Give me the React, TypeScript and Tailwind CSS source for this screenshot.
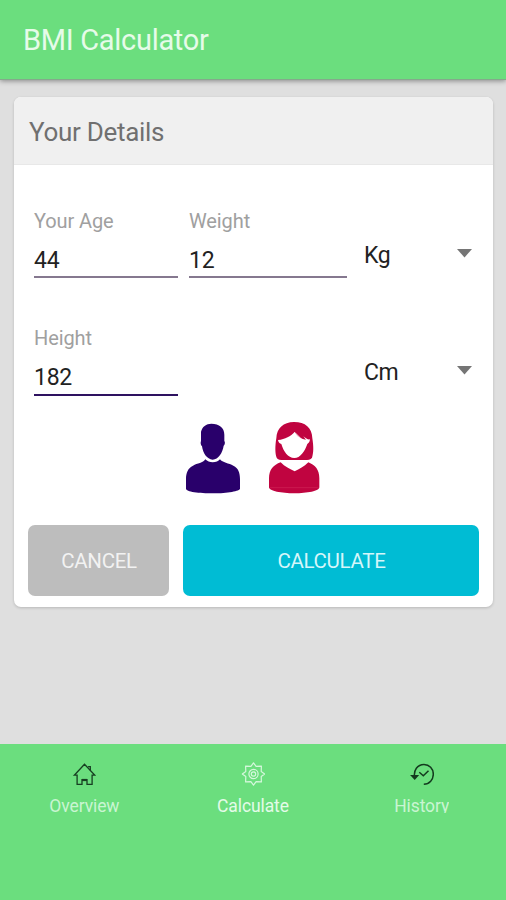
import { useState } from "react";

type FieldProps = {
  label: string;
  value: string;
  onChange: (value: string) => void;
  className: string;
  active?: boolean;
};

function Field({ label, value, onChange, className, active }: FieldProps) {
  return (
    <label className={`block ${className}`}>
      <span className="block h-6 text-[20px] leading-6 tracking-[-0.1px] text-[#a0a0a0]">{label}</span>
      <input
        value={value}
        onChange={(e) => onChange(e.target.value)}
        className={`mt-[13px] block w-full border-b-2 bg-transparent pb-0.5 text-[23px] leading-7 tracking-[-0.3px] text-[#222] outline-none ${
          active ? "h-[33px] border-[#2e1260]" : "h-8 border-[#85788f]"
        }`}
      />
    </label>
  );
}

function UnitSelect({ unit }: { unit: string }) {
  return (
    <button className="flex h-8 w-[109px] items-center justify-between text-[23px] leading-8 text-[#222]">
      <span className="pl-px tracking-[-0.4px]">{unit}</span>
      <svg width="15" height="9" viewBox="0 0 15 9" className="-mt-1.5">
        <path d="M0 0H15L7.5 8.5Z" fill="#757575" />
      </svg>
    </button>
  );
}

function ManIcon() {
  return (
    <svg width="56" height="75" viewBox="45 30 168 225" fill="#29006b">
      <path d="M93 66C96 50 109 41 124 41C148 41 163 53 163 74V93C166 96 165 104 161 107C158 128 145 148 128 149C111 148 99 130 96 109C92 106 91 97 93 93Z" />
      <path d="M106 148C112 153 119 157 128 157C138 157 145 153 150 148C157 158 177 160 190 167C205 174 210 188 210 207V236C210 243 172 250 130 250C87 250 48 245 48 236V207C48 188 54 174 69 167C82 160 99 159 106 148Z" />
    </svg>
  );
}

function WomanIcon() {
  return (
    <svg width="52" height="75" viewBox="294 30 156 225">
      <path
        d="M372 36C406 36 426 53 427 85C431 110 431 128 426 143C422 149 414 150 404 150H342C331 150 323 149 320 143C315 131 315 108 319 85C320 55 340 36 372 36Z"
        fill="#c00440"
      />
      <path
        d="M324 90C346 88 362 79 374 66C380 78 391 87 408 89L400 79C408 85 414 90 420 88C419 97 415 100 412 102C404 125 391 144 373 144C354 144 340 123 334 102C329 101 325 97 324 90Z"
        fill="white"
      />
      <path d="M374 67L394 87" stroke="white" strokeWidth="3" />
      <path
        d="M332 157C344 170 360 178 374 184C388 178 402 170 415 157C436 166 448 179 448 205V232C448 243 412 250 373 250C335 250 297 243 297 232V205C297 179 310 165 332 157Z"
        fill="#c00440"
      />
      <path d="M300 233H446" stroke="#d02458" strokeWidth="2" />
    </svg>
  );
}

function HomeIcon() {
  return (
    <svg width="24" height="24" viewBox="-0.5 0 24 24" fill="none" stroke="#173f22" strokeWidth="1.3">
      <path d="M1.8 13.2L12 2.3L22.4 13.2H19.6V22.3H14.5V17.7H9.5V22.3H4.6V13.2Z" />
      <path d="M15.6 4.7H17.8V8.2" />
      <path d="M9.5 18H14.5" strokeWidth="2.2" />
    </svg>
  );
}

function GearIcon() {
  return (
    <svg width="24" height="24" viewBox="-0.5 0 24 24" fill="none" stroke="#d5f7dc" strokeWidth="1.2" strokeLinejoin="round">
      <path d="M12 .8L14.6 4.3L19.9 4.1L19.7 9.4L23.2 12L19.7 14.6L19.9 19.9L14.6 19.7L12 23.2L9.4 19.7L4.1 19.9L4.3 14.6L.8 12L4.3 9.4L4.1 4.1L9.4 4.3Z" />
      <circle cx="12" cy="12" r="4.6" />
      <circle cx="12" cy="12" r="2.2" />
    </svg>
  );
}

function HistoryIcon() {
  return (
    <svg width="24" height="24" viewBox="-1.5 0 24 24" fill="none" stroke="#143a1e" strokeWidth="1.5">
      <path d="M3.2 15.5C1.7 8.4 6 2.4 12.5 2.4C17.8 2.4 21.8 6.6 21.8 12.2C21.8 17.6 18 22 12.3 22.2" />
      <path d="M0.3 13.7L3.2 16.8L6 13.7Z" fill="#143a1e" />
      <path d="M7.8 10.3L11.8 13.8L17 8.8" />
    </svg>
  );
}

const tabs = [
  { label: "Overview", icon: HomeIcon, color: "text-[#c9f5d2]" },
  { label: "Calculate", icon: GearIcon, color: "text-[#e3fbe8]" },
  { label: "History", icon: HistoryIcon, color: "h-[19px] overflow-hidden text-[#c9f5d2]" },
];

export default function App() {
  const [age, setAge] = useState("44");
  const [weight, setWeight] = useState("12");
  const [height, setHeight] = useState("182");

  return (
    <div className="flex h-[900px] w-[506px] flex-col overflow-hidden bg-[#dfdfdf] font-[Roboto,sans-serif]">
      <header className="h-20 shrink-0 border-b border-[#85a98c] bg-[#6bde7e] pl-[23px] pt-5 shadow-[0_1px_5px_rgba(0,0,0,0.4)]">
        <h1 className="text-[29px] leading-10 tracking-[-0.3px] text-[#e6fbe9]">BMI Calculator</h1>
      </header>

      <main className="flex-1 pl-[14px] pt-[17px]">
        <section className="h-[510px] w-[479px] overflow-hidden rounded-[7px] bg-white shadow-[0_1px_3px_rgba(0,0,0,0.18)]">
          <div className="h-[68px] border-b border-[#e8e8e8] bg-[#f0f0f0] pl-[15px] pt-[15px]">
            <h2 className="text-[26px] leading-10 tracking-[-0.3px] text-[#707070]">Your Details</h2>
          </div>

          <div className="flex pl-5 pt-[44px]">
            <Field label="Your Age" value={age} onChange={setAge} className="w-[144px]" />
            <Field label="Weight" value={weight} onChange={setWeight} className="ml-[11px] w-[158px]" />
            <div className="ml-4 pt-[31px]">
              <UnitSelect unit="Kg" />
            </div>
          </div>

          <div className="flex pl-5 pt-[48px]">
            <Field label="Height" value={height} onChange={setHeight} className="w-[144px]" active />
            <div className="ml-[185px] pt-[31px]">
              <UnitSelect unit="Cm" />
            </div>
          </div>

          <div className="mt-6 flex gap-[27px] pl-[171px]">
            <ManIcon />
            <WomanIcon />
          </div>

          <div className="mt-[30px] flex gap-[14px] px-[14px] text-[20.5px] tracking-[-0.3px]">
            <button className="h-[71px] w-[141px] rounded-[7px] bg-[#bdbdbd] pl-px pt-0.5 text-[#f2f2f2]">CANCEL</button>
            <button className="h-[71px] w-[296px] rounded-[7px] bg-[#00bcd4] pl-px pt-0.5 text-[#d5f6fa]">
              CALCULATE
            </button>
          </div>
        </section>
      </main>

      <nav className="flex h-[156px] shrink-0 bg-[#6bde7e]">
        {tabs.map(({ label, icon: Icon, color }) => (
          <button key={label} className="flex flex-1 flex-col items-center pt-[18px]">
            <Icon />
            <span className={`mt-2 text-[17.5px] leading-6 tracking-[-0.1px] ${color}`}>{label}</span>
          </button>
        ))}
      </nav>
    </div>
  );
}
